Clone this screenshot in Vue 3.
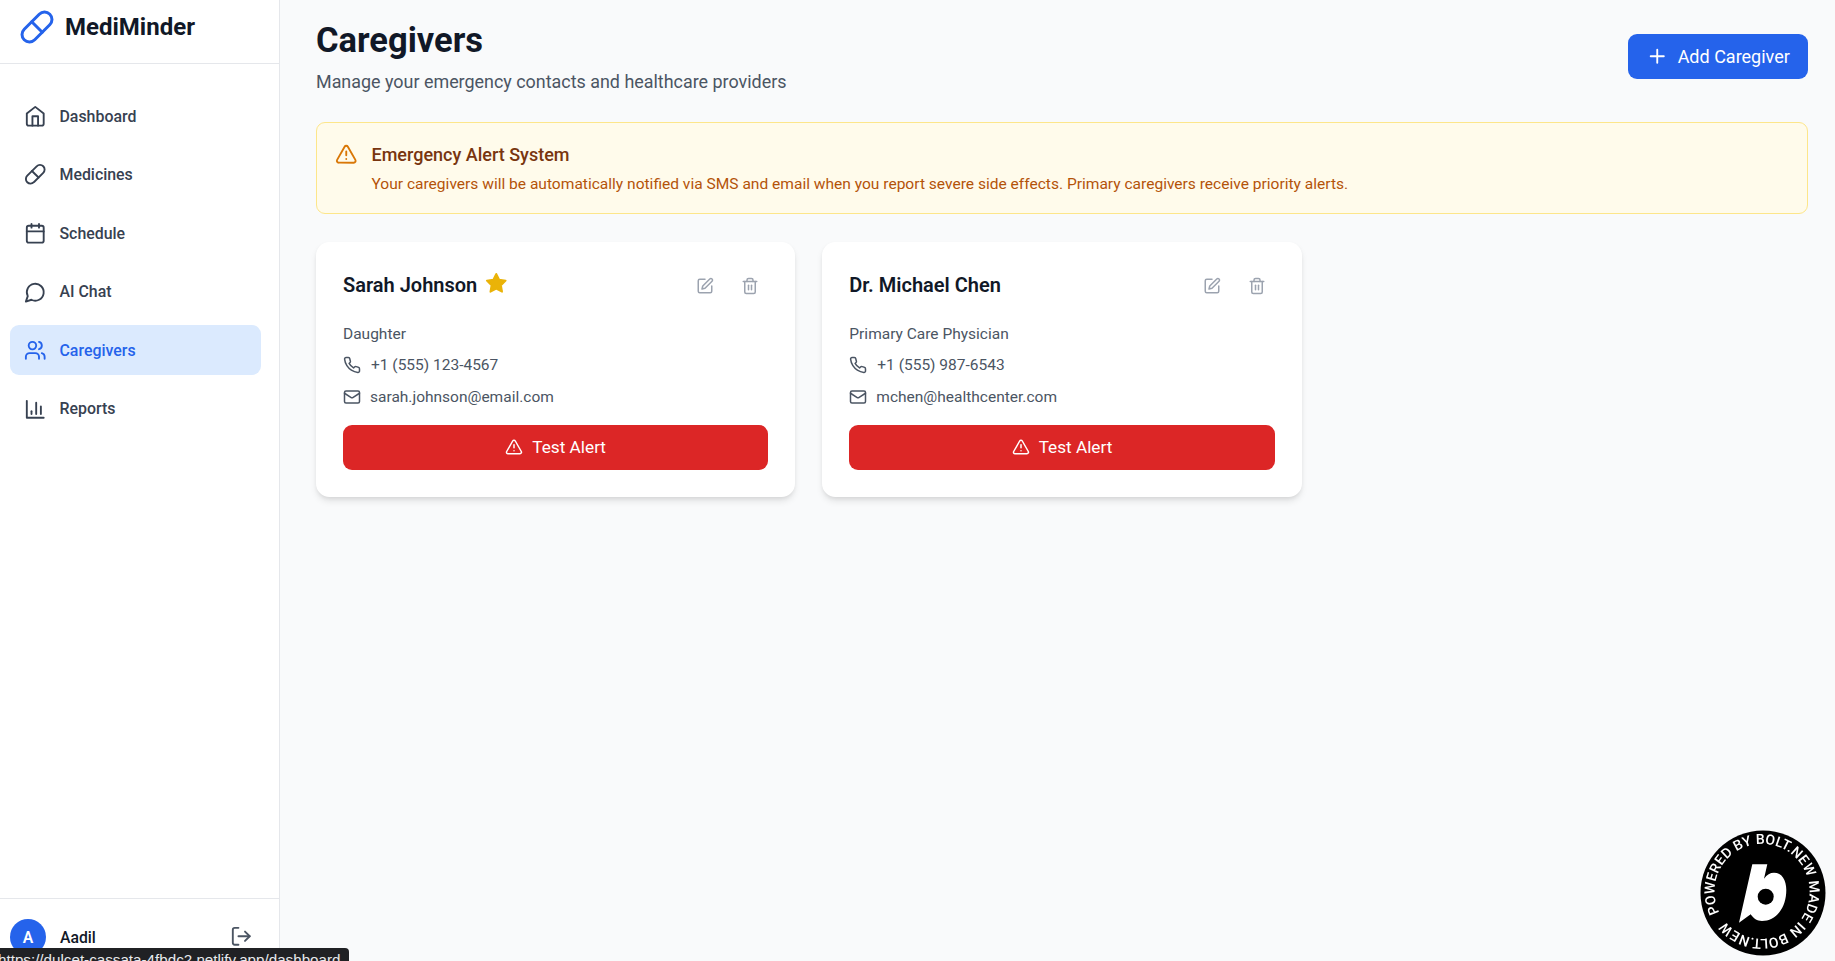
<script setup>
import { h } from 'vue'

const paths = {
  home: ['m3 9 9-7 9 7v11a2 2 0 0 1-2 2H5a2 2 0 0 1-2-2z', 'M9 22V12h6v10'],
  pill: ['m10.5 20.5 10-10a4.95 4.95 0 1 0-7-7l-10 10a4.95 4.95 0 1 0 7 7Z', 'm8.5 8.5 7 7'],
  calendar: ['M5 4h14a2 2 0 0 1 2 2v14a2 2 0 0 1-2 2H5a2 2 0 0 1-2-2V6a2 2 0 0 1 2-2z', 'M16 2v4', 'M8 2v4', 'M3 10h18'],
  chat: ['M7.9 20A9 9 0 1 0 4 16.1L2 22Z'],
  users: ['M16 21v-2a4 4 0 0 0-4-4H6a4 4 0 0 0-4 4v2', 'M13 7a4 4 0 1 1-8 0 4 4 0 0 1 8 0z', 'M22 21v-2a4 4 0 0 0-3-3.87', 'M16 3.13a4 4 0 0 1 0 7.75'],
  chart: ['M3 3v18h18', 'M18 17V9', 'M13 17V5', 'M8 17v-3'],
  phone: ['M22 16.92v3a2 2 0 0 1-2.18 2 19.79 19.79 0 0 1-8.63-3.07 19.5 19.5 0 0 1-6-6 19.79 19.79 0 0 1-3.07-8.67A2 2 0 0 1 4.11 2h3a2 2 0 0 1 2 1.72 12.84 12.84 0 0 0 .7 2.81 2 2 0 0 1-.45 2.11L8.09 9.91a16 16 0 0 0 6 6l1.27-1.27a2 2 0 0 1 2.11-.45 12.84 12.84 0 0 0 2.81.7A2 2 0 0 1 22 16.92z'],
  mail: ['M4 4h16a2 2 0 0 1 2 2v12a2 2 0 0 1-2 2H4a2 2 0 0 1-2-2V6a2 2 0 0 1 2-2z', 'm22 7-8.97 5.7a1.94 1.94 0 0 1-2.06 0L2 7'],
  edit: ['M12 3H5a2 2 0 0 0-2 2v14a2 2 0 0 0 2 2h14a2 2 0 0 0 2-2v-7', 'M18.375 2.625a2.121 2.121 0 1 1 3 3L12 15l-4 1 1-4Z'],
  trash: ['M3 6h18', 'M19 6v14c0 1-1 2-2 2H7c-1 0-2-1-2-2V6', 'M8 6V4c0-1 1-2 2-2h4c1 0 2 1 2 2v2', 'M10 11v6', 'M14 11v6'],
  star: ['M12 2l3.09 6.26L22 9.27l-5 4.87 1.18 6.88L12 17.77l-6.18 3.25L7 14.14 2 9.27l6.91-1.01L12 2z'],
  alert: ['m21.73 18-8-14a2 2 0 0 0-3.48 0l-8 14A2 2 0 0 0 4 21h16a2 2 0 0 0 1.73-3Z', 'M12 9v4', 'M12 17h.01'],
  plus: ['M5 12h14', 'M12 5v14'],
  logout: ['M9 21H5a2 2 0 0 1-2-2V5a2 2 0 0 1 2-2h4', 'm16 17 5-5-5-5', 'M21 12H9']
}

const Icon = (props) =>
  h(
    'svg',
    {
      viewBox: '0 0 24 24',
      fill: props.name === 'star' ? 'currentColor' : 'none',
      stroke: 'currentColor',
      'stroke-width': 2,
      'stroke-linecap': 'round',
      'stroke-linejoin': 'round'
    },
    paths[props.name].map((d) => h('path', { d }))
  )
Icon.props = ['name']

const nav = [
  { label: 'Dashboard', icon: 'home' },
  { label: 'Medicines', icon: 'pill' },
  { label: 'Schedule', icon: 'calendar' },
  { label: 'AI Chat', icon: 'chat' },
  { label: 'Caregivers', icon: 'users', active: true },
  { label: 'Reports', icon: 'chart' }
]

const caregivers = [
  { name: 'Sarah Johnson', primary: true, role: 'Daughter', phone: '+1 (555) 123-4567', email: 'sarah.johnson@email.com' },
  { name: 'Dr. Michael Chen', primary: false, role: 'Primary Care Physician', phone: '+1 (555) 987-6543', email: 'mchen@healthcenter.com' }
]
</script>

<template>
  <div class="app">
    <aside class="sidebar">
      <div class="brand">
        <Icon name="pill" class="brand-icon" />
        <span class="brand-name">MediMinder</span>
      </div>
      <nav class="nav">
        <a v-for="item in nav" :key="item.label" class="nav-item" :class="{ active: item.active }">
          <Icon :name="item.icon" class="nav-icon" />
          <span>{{ item.label }}</span>
        </a>
      </nav>
      <div class="user">
        <div class="avatar">A</div>
        <span class="user-name">Aadil</span>
        <Icon name="logout" class="logout" />
      </div>
    </aside>

    <main class="main">
      <header class="head">
        <div>
          <h1 class="title">Caregivers</h1>
          <p class="subtitle">Manage your emergency contacts and healthcare providers</p>
        </div>
        <button class="add-btn">
          <Icon name="plus" class="add-icon" />
          <span>Add Caregiver</span>
        </button>
      </header>

      <section class="notice">
        <Icon name="alert" class="notice-icon" />
        <div>
          <h3 class="notice-title">Emergency Alert System</h3>
          <p class="notice-text">Your caregivers will be automatically notified via SMS and email when you report severe side effects. Primary caregivers receive priority alerts.</p>
        </div>
      </section>

      <section class="grid">
        <article v-for="c in caregivers" :key="c.name" class="card">
          <div class="card-top">
            <div class="name-row">
              <h3 class="name">{{ c.name }}</h3>
              <Icon v-if="c.primary" name="star" class="star" />
            </div>
            <div class="actions">
              <Icon name="edit" class="action" />
              <Icon name="trash" class="action" />
            </div>
          </div>
          <p class="role">{{ c.role }}</p>
          <div class="line phone"><Icon name="phone" class="line-icon" /><span>{{ c.phone }}</span></div>
          <div class="line mail"><Icon name="mail" class="line-icon" /><span>{{ c.email }}</span></div>
          <button class="test-btn">
            <Icon name="alert" class="test-icon" />
            <span>Test Alert</span>
          </button>
        </article>
      </section>
    </main>

    <svg class="badge" viewBox="0 0 126 126" aria-label="Powered by Bolt.new">
      <defs>
        <path id="ring" d="M19.5 82.5A47.5 47.5 0 1 1 19.6 82.7" />
      </defs>
      <circle cx="63" cy="63" r="62.5" fill="#000" />
      <text class="badge-text" textLength="287" lengthAdjust="spacing"><textPath href="#ring">POWERED BY BOLT.NEW MADE IN BOLT.NEW</textPath></text>
      <path d="M52.3 34.3H67.3L64 48.7C67 44.5 70 42.7 74 42.7 82 42.7 86.3 50 86.3 60 86.3 78 76 91 62 91 57 91 53.5 88.5 50.7 84.3L39 92.7Z" fill="#fff" />
      <circle cx="65.7" cy="66.7" r="8" fill="#000" />
    </svg>

    <div class="status">https://dulcet-cassata-4fbdc2.netlify.app/dashboard</div>
  </div>
</template>

<style>
html, body { margin: 0; background: #f9fafb; overflow: hidden; }
</style>

<style scoped>
.app {
  display: flex;
  height: 961px;
  overflow: hidden;
  background: #f9fafb;
  font-family: Roboto, "Noto Sans", sans-serif;
  color: #111827;
}
.sidebar {
  width: 279px;
  flex: none;
  display: flex;
  flex-direction: column;
  background: #fff;
  border-right: 1px solid #e5e7eb;
}
.brand {
  height: 64px;
  flex: none;
  box-sizing: border-box;
  display: flex;
  align-items: center;
  gap: 10px;
  padding: 0 0 9px 19px;
  border-bottom: 1px solid #e5e7eb;
}
.brand-icon { width: 36px; height: 36px; color: #2563eb; }
.brand-name { font-size: 24px; font-weight: 700; }
.nav {
  flex: 1;
  display: flex;
  flex-direction: column;
  gap: 8.6px;
  padding: 27px 18px 0 10px;
}
.nav-item {
  height: 50px;
  display: flex;
  align-items: center;
  gap: 13.5px;
  padding-left: 13.5px;
  border-radius: 9px;
  font-size: 15.9px;
  font-weight: 500;
  color: #374151;
}
.nav-item.active { background: #dbeafe; color: #2563eb; }
.nav-icon { width: 22.5px; height: 22.5px; flex: none; }
.user {
  height: 63px;
  flex: none;
  display: flex;
  align-items: flex-start;
  padding: 20px 18px 0 10px;
  box-sizing: border-box;
  border-top: 1px solid #e5e7eb;
}
.avatar {
  width: 36px;
  height: 36px;
  flex: none;
  border-radius: 50%;
  background: #2563eb;
  color: #fff;
  display: flex;
  align-items: center;
  justify-content: center;
  font-size: 15.75px;
  font-weight: 600;
}
.user-name { margin-left: 14px; flex: 1; font-size: 15.75px; font-weight: 500; line-height: 38px; }
.logout { width: 22.5px; height: 22.5px; margin: 6px 9px 0 0; color: #4b5563; }
.main { flex: 1; min-width: 0; padding: 20px 27px 0 36px; }
.head { display: flex; justify-content: space-between; align-items: flex-start; }
.title { margin: 0; font-size: 34.5px; line-height: 40.5px; font-weight: 700; }
.subtitle { margin: 7px 0 0; font-size: 17.92px; line-height: 27px; color: #4b5563; }
.add-btn {
  margin-top: 14px;
  height: 45px;
  width: 180px;
  display: flex;
  align-items: center;
  justify-content: center;
  gap: 9px;
  border: 0;
  border-radius: 9px;
  background: #2563eb;
  color: #fff;
  font-family: inherit;
  font-size: 18px;
}
.add-icon { width: 22.5px; height: 22.5px; }
.notice {
  margin-top: 27px;
  display: flex;
  gap: 14px;
  height: 92px;
  box-sizing: border-box;
  padding: 18px 18px 0 18px;
  background: #fffbeb;
  border: 1px solid #fde68a;
  border-radius: 9px;
}
.notice-icon { width: 22.5px; height: 22.5px; flex: none; margin-top: 2px; color: #d97706; }
.notice-title { margin: 0; font-size: 18px; line-height: 27px; font-weight: 500; color: #78350f; }
.notice-text { margin: 4px 0 0; font-size: 15.56px; line-height: 24px; color: #b45309; }
.grid {
  margin-top: 28px;
  display: grid;
  grid-template-columns: repeat(3, 1fr);
  gap: 27px;
}
.card {
  height: 255px;
  box-sizing: border-box;
  padding: 30px 27px 27px;
  background: #fff;
  border-radius: 13.5px;
  box-shadow: 0 4.5px 7px -1px rgba(0, 0, 0, 0.1), 0 2px 5px -2px rgba(0, 0, 0, 0.1);
}
.card-top { display: flex; justify-content: space-between; align-items: center; height: 27px; }
.name-row { display: flex; align-items: center; gap: 9px; }
.name { margin: 0; font-size: 20px; font-weight: 600; line-height: 27px; }
.star { width: 22.5px; height: 22.5px; color: #eab308; margin-top: -3px; margin-left: -1px; }
.actions { display: flex; gap: 27px; margin: 1px 9px 0 0; }
.action { width: 18px; height: 18px; color: #9ca3af; }
.role { margin: 23px 0 0; font-size: 15.5px; line-height: 24px; color: #4b5563; }
.line { display: flex; align-items: center; gap: 10px; font-size: 15.5px; line-height: 24px; color: #4b5563; margin-top: 7.5px; }
.line-icon { width: 18px; height: 18px; flex: none; }
.mail { gap: 9px; }
.test-btn {
  margin-top: 16px;
  width: 100%;
  height: 45px;
  display: flex;
  align-items: center;
  justify-content: center;
  gap: 9px;
  border: 0;
  border-radius: 9px;
  background: #dc2626;
  color: #fff;
  font-family: inherit;
  font-size: 17.2px;
}
.test-icon { width: 18px; height: 18px; }
.badge { position: fixed; right: 9px; bottom: 5px; width: 126px; height: 126px; }
.badge-text { font-family: Roboto, sans-serif; font-size: 14px; font-weight: 500; fill: #fff; }
.status {
  position: fixed;
  left: 0;
  bottom: 0;
  width: 349px;
  height: 13px;
  overflow: hidden;
  box-sizing: border-box;
  padding-top: 3px;
  background: #202124;
  border-top-right-radius: 4px;
  color: #e8eaed;
  font-family: "Liberation Sans", sans-serif;
  font-size: 15.2px;
  line-height: 18px;
  text-indent: -2px;
  white-space: nowrap;
}
</style>
